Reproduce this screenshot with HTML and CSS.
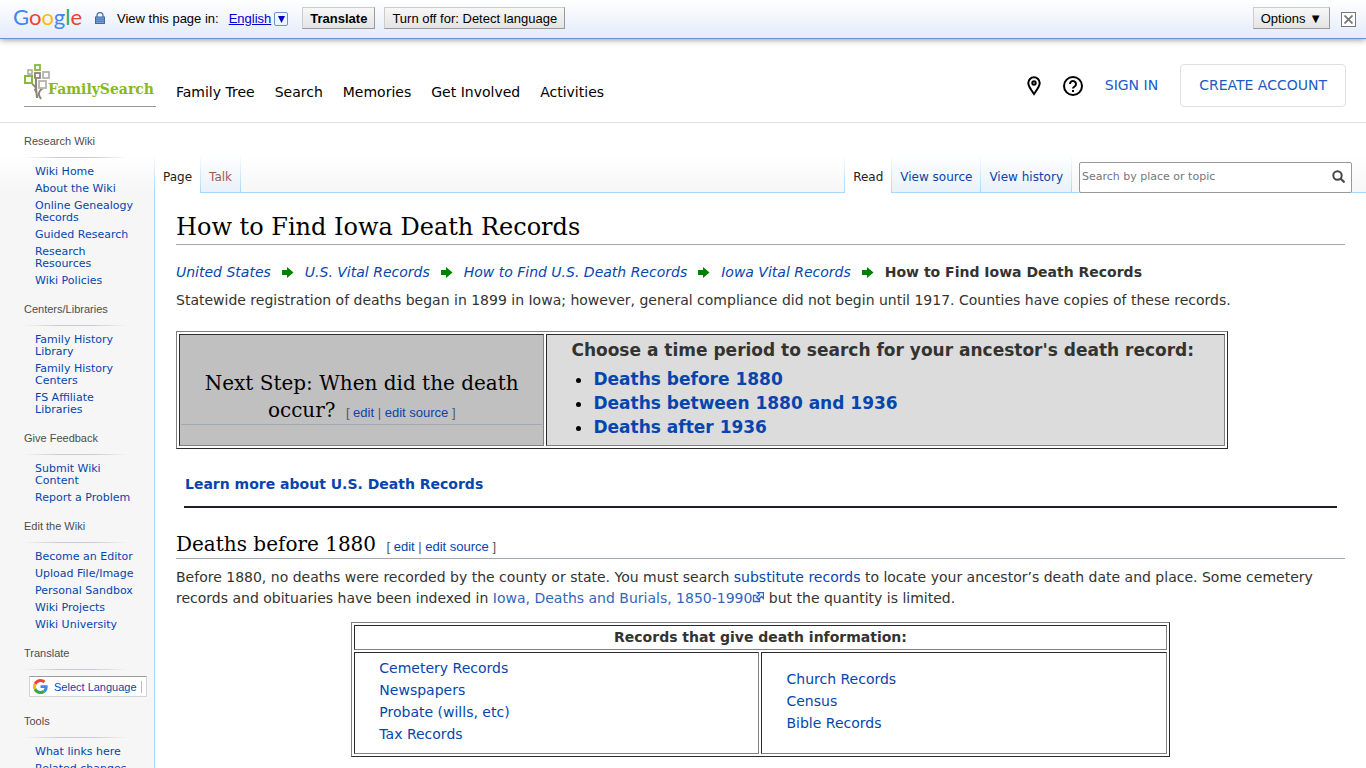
FILE: index.html
```html
<!DOCTYPE html>
<html lang="en">
<head>
  <meta charset="UTF-8" />
  <meta name="viewport" content="width=device-width, initial-scale=1.0"/>
  <title>How to Find Iowa Death Records - FamilySearch Wiki</title>
  <link rel="stylesheet" href="styles.css">
</head>
<body>
  <!-- Google translate bar -->
  <div class="translate-bar">
    <span class="google-logo"><span class="g-blue">G</span><span class="g-red">o</span><span class="g-yellow">o</span><span class="g-blue">g</span><span class="g-green">l</span><span class="g-red">e</span></span>
    <svg class="lock" width="10" height="12" viewBox="0 0 10 12">
      <path d="M2 5V3.5a3 3 0 0 1 6 0V5" fill="none" stroke="#5779a8" stroke-width="1.4"/>
      <rect x="0.5" y="5" width="9" height="6.5" fill="#7aa3dc" stroke="#41699e"/>
      <path d="M1 7.2h8M1 9.3h8" stroke="#41699e" stroke-width="0.8"/>
    </svg>
    <span class="view-in">View this page in:</span>
    <a class="lang" href="#"><span class="lang-name">English</span><span class="lang-arrow"><svg width="7" height="7" viewBox="0 0 7 7"><path d="M0 0h7L3.500 7z" fill="#00c"/></svg></span></a>
    <button class="bar-btn bold">Translate</button>
    <button class="bar-btn">Turn off for: Detect language</button>
    <button class="bar-btn options">Options ▼</button>
    <button class="close-btn" aria-label="Close"><svg width="9" height="9" viewBox="0 0 9 9"><path d="M0.500 0.500l8 8M8.500 0.500l-8 8" stroke="#777" stroke-width="1.800"/></svg></button>
  </div>

  <header class="site-header">
    <a class="logo" href="#">
      <svg width="27" height="36" viewBox="0 0 27 36" fill="none">
        <path d="M10.500 25c2 2 2.500 4 2.500 9M12 15v8c0 4 1 8 1 11M19 24c-3 2-4.500 4-4 7 .3 1.500 1 2.500 2 4" stroke="#8c8378" stroke-width="2"/>
        <path d="M8 20c2 1 3.500 3 4 6" stroke="#8c8378" stroke-width="1.400"/>
        <rect x="11" y="1" width="5" height="5" stroke="#87b940" stroke-width="1.800"/>
        <rect x="4" y="6" width="4" height="4" stroke="#a6a6a0" stroke-width="1.500"/>
        <rect x="11" y="9" width="5" height="5" stroke="#8c8378" stroke-width="1.800"/>
        <rect x="19" y="8" width="6" height="6" stroke="#b4b4ae" stroke-width="1.800"/>
        <rect x="1" y="12" width="7" height="7" fill="#fff" stroke="#87b940" stroke-width="2"/>
        <rect x="15" y="17" width="7" height="7" fill="#fff" stroke="#b4b4ae" stroke-width="1.800"/>
      </svg>
      <span>FamilySearch</span>
    </a>
    <nav class="main-nav">
      <a href="#">Family Tree</a>
      <a href="#">Search</a>
      <a href="#">Memories</a>
      <a href="#">Get Involved</a>
      <a href="#">Activities</a>
    </nav>
    <div class="account">
      <a href="#" aria-label="Locations"><svg width="14" height="20" viewBox="0 0 14 20" fill="none" stroke="#000" stroke-width="2"><path d="M7 18C4 13.500 1.300 10.500 1.300 7a5.700 5.700 0 0 1 11.400 0C12.700 10.500 10 13.500 7 18z"/><circle cx="7" cy="7" r="1.700"/></svg></a>
      <a href="#" aria-label="Help"><svg width="20" height="20" viewBox="0 0 20 20" fill="none" stroke="#000" stroke-width="2"><circle cx="10" cy="10" r="9"/><path d="M7 8a3 3 0 1 1 4.600 2.500C10.400 11.200 10 11.600 10 12.600"/><path d="M10 14v2"/></svg></a>
      <a class="sign-in" href="#">SIGN IN</a>
      <a class="create" href="#">CREATE ACCOUNT</a>
    </div>
  </header>

  <div class="wiki">
    <aside class="sidebar">
      <section>
        <h3>Research Wiki</h3>
        <ul>
          <li><a href="#">Wiki Home</a></li>
          <li><a href="#">About the Wiki</a></li>
          <li><a href="#">Online Genealogy Records</a></li>
          <li><a href="#">Guided Research</a></li>
          <li><a href="#">Research Resources</a></li>
          <li><a href="#">Wiki Policies</a></li>
        </ul>
      </section>
      <section>
        <h3>Centers/Libraries</h3>
        <ul>
          <li><a href="#">Family History Library</a></li>
          <li><a href="#">Family History Centers</a></li>
          <li><a href="#">FS Affiliate Libraries</a></li>
        </ul>
      </section>
      <section>
        <h3>Give Feedback</h3>
        <ul>
          <li><a href="#">Submit Wiki Content</a></li>
          <li><a href="#">Report a Problem</a></li>
        </ul>
      </section>
      <section>
        <h3>Edit the Wiki</h3>
        <ul>
          <li><a href="#">Become an Editor</a></li>
          <li><a href="#">Upload File/Image</a></li>
          <li><a href="#">Personal Sandbox</a></li>
          <li><a href="#">Wiki Projects</a></li>
          <li><a href="#">Wiki University</a></li>
        </ul>
      </section>
      <section>
        <h3>Translate</h3>
        <a class="select-lang" href="#">
          <svg width="15" height="15" viewBox="0 0 48 48"><path fill="#ea4335" d="M24 9.500c3.500 0 6.700 1.200 9.200 3.600l6.900-6.900C35.900 2.400 30.500 0 24 0 14.600 0 6.500 5.400 2.600 13.200l8 6.200C12.400 13.700 17.700 9.500 24 9.500z"/><path fill="#4285f4" d="M47 24.500c0-1.600-.2-3.100-.4-4.500H24v9h12.900c-.6 3-2.200 5.500-4.700 7.200l7.700 6C44.400 38 47 31.800 47 24.500z"/><path fill="#fbbc05" d="M10.500 28.600a14.500 14.500 0 0 1 0-9.200l-8-6.200a24 24 0 0 0 0 21.600z"/><path fill="#34a853" d="M24 48c6.500 0 11.900-2.100 15.900-5.800l-7.700-6c-2.200 1.500-4.900 2.300-8.200 2.300-6.300 0-11.600-4.200-13.500-9.900l-8 6.200C6.500 42.600 14.600 48 24 48z"/></svg>
          <span>Select Language</span>
        </a>
      </section>
      <section>
        <h3>Tools</h3>
        <ul>
          <li><a href="#">What links here</a></li>
          <li><a href="#">Related changes</a></li>
        </ul>
      </section>
    </aside>

    <div class="main">
      <div class="tabs">
        <a class="tab selected" href="#">Page</a>
        <a class="tab new" href="#">Talk</a>
        <a class="tab selected right" href="#">Read</a>
        <a class="tab" href="#">View source</a>
        <a class="tab" href="#">View history</a>
        <form class="search">
          <input type="text" placeholder="Search by place or topic" aria-label="Search by place or topic">
          <button type="button" aria-label="Search"><svg width="13" height="13" viewBox="0 0 13 13" fill="none" stroke="#444" stroke-width="2"><circle cx="5.500" cy="5.500" r="4.200"/><path d="M8.500 8.500l4 4"/></svg></button>
        </form>
      </div>

      <main class="content">
        <h1>How to Find Iowa Death Records</h1>
        <p class="crumbs">
          <a href="#">United States</a>
          <svg class="arrow" width="12" height="12" viewBox="0 0 12 12"><path d="M0 3h5V0l6.500 5.500L5 11V8H0z" fill="#008000"/></svg>
          <a href="#">U.S. Vital Records</a>
          <svg class="arrow" width="12" height="12" viewBox="0 0 12 12"><path d="M0 3h5V0l6.500 5.500L5 11V8H0z" fill="#008000"/></svg>
          <a href="#">How to Find U.S. Death Records</a>
          <svg class="arrow" width="12" height="12" viewBox="0 0 12 12"><path d="M0 3h5V0l6.500 5.500L5 11V8H0z" fill="#008000"/></svg>
          <a href="#">Iowa Vital Records</a>
          <svg class="arrow" width="12" height="12" viewBox="0 0 12 12"><path d="M0 3h5V0l6.500 5.500L5 11V8H0z" fill="#008000"/></svg>
          <b>How to Find Iowa Death Records</b>
        </p>
        <p class="intro">Statewide registration of deaths began in 1899 in Iowa; however, general compliance did not begin until 1917. Counties have copies of these records.</p>

        <table class="step-table">
          <tr>
            <td class="step">
              <h2>Next Step: When did the death<br>occur? <span class="edit">[ <a href="#">edit</a> | <a href="#">edit source</a> ]</span></h2>
            </td>
            <td class="choose">
              <p>Choose a time period to search for your ancestor's death record:</p>
              <ul>
                <li><a href="#">Deaths before 1880</a></li>
                <li><a href="#">Deaths between 1880 and 1936</a></li>
                <li><a href="#">Deaths after 1936</a></li>
              </ul>
            </td>
          </tr>
        </table>

        <p class="learn"><a href="#">Learn more about U.S. Death Records</a></p>

        <h2>Deaths before 1880 <span class="edit">[ <a href="#">edit</a> | <a href="#">edit source</a> ]</span></h2>
        <p>Before 1880, no deaths were recorded by the county or state. You must search <a href="#">substitute records</a> to locate your ancestor’s death date and place. Some cemetery records and obituaries have been indexed in <a class="external" href="#">Iowa, Deaths and Burials, 1850-1990<svg width="12" height="11" viewBox="0 0 12 11" fill="none" stroke="#36b"><path d="M4.500 3.500h-3v6h6v-3" stroke-width="1.300"/><path d="M5.500 0.500h6v6l-2-2-3 3-2-2 3-3z" fill="#fff" stroke-width="1.300"/></svg></a> but the quantity is limited.</p>

        <table class="records-table">
          <tr><th colspan="2">Records that give death information:</th></tr>
          <tr>
            <td>
              <ul>
                <li><a href="#">Cemetery Records</a></li>
                <li><a href="#">Newspapers</a></li>
                <li><a href="#">Probate (wills, etc)</a></li>
                <li><a href="#">Tax Records</a></li>
              </ul>
            </td>
            <td>
              <ul>
                <li><a href="#">Church Records</a></li>
                <li><a href="#">Census</a></li>
                <li><a href="#">Bible Records</a></li>
              </ul>
            </td>
          </tr>
        </table>
      </main>
    </div>
  </div>
</body>
</html>
```
FILE: styles.css
```css
:root {
  --link: #0645ad;
  --tab-line: #a7d7f9;
  --sans: Verdana, "DejaVu Sans", sans-serif;
  --arial: Arial, "Liberation Sans", sans-serif;
  --slab: "Museo Slab", "DejaVu Serif", serif;
}
* {
  box-sizing: border-box;
}
body {
  margin: 0;
  background: #fff;
  color: #333331;
  font-family: var(--sans);
  font-size: 14px;
  line-height: 21px;
}
a {
  color: var(--link);
  text-decoration: none;
}
svg {
  flex: none;
}
ul {
  margin: 0;
  padding: 0;
  list-style: none;
}

/* translate bar */
.translate-bar {
  position: relative;
  display: flex;
  align-items: center;
  height: 39px;
  padding: 0 10px 2px 13px;
  background: linear-gradient(#fff, #e3ecfa);
  border-bottom: 1px solid #6b90da;
  box-shadow: 0 1px 6px #999;
  font-family: var(--arial);
  font-size: 13px;
  color: #000;
}
.google-logo {
  width: 68px;
  margin-right: 14px;
  padding-bottom: 3px;
  font-family: Lato, sans-serif;
  font-size: 22px;
}
.g-blue { color: #4285f4; }
.g-red { color: #ea4335; }
.g-yellow { color: #fbbc05; }
.g-green { color: #34a853; }
.view-in {
  margin: 0 10px 0 12px;
}
.lang {
  display: flex;
  align-items: center;
  gap: 3px;
  margin-right: 14px;
  color: #00c;
}
.lang-name {
  text-decoration: underline;
}
.lang-arrow {
  display: flex;
  align-items: center;
  justify-content: center;
  width: 14px;
  height: 14px;
  margin-top: 2px;
  border: 1px solid #6b90da;
  border-radius: 2px;
}
.bar-btn {
  height: 22px;
  margin-right: 9px;
  padding: 0 7px;
  background: linear-gradient(#f7f7f7, #e4e4e4);
  border: 1px solid;
  border-color: #ccc #999 #999 #ccc;
  font-family: var(--arial);
  font-size: 13px;
  color: #000;
}
.bold {
  font-weight: bold;
}
.options {
  margin-left: auto;
  margin-right: 11px;
}
.close-btn {
  display: flex;
  align-items: center;
  justify-content: center;
  width: 15px;
  height: 15px;
  margin-top: 2px;
  padding: 0;
  background: #fff;
  border: 1px solid #777;
}

/* site header */
.site-header {
  display: flex;
  align-items: center;
  height: 84px;
  padding: 10px 20px 0 24px;
  border-bottom: 1px solid #dfe0e1;
}
.logo {
  display: flex;
  width: 132px;
  height: 43px;
  margin-right: 20px;
  border-bottom: 1px solid #999;
}
.logo span {
  margin: 15px 0 0 -3px;
  font-family: "DejaVu Serif", serif;
  font-size: 14px;
  font-weight: bold;
  color: #87b91c;
}
.main-nav {
  display: flex;
  gap: 20px;
  padding-top: 13px;
}
.main-nav a {
  color: #000;
}
.account {
  display: flex;
  align-items: center;
  margin-left: auto;
}
.account svg {
  display: block;
  margin-right: 22px;
}
.account a {
  color: #1b5bc4;
}
.create {
  margin-left: 22px;
  padding: 10px 18px;
  border: 1px solid #dfe0e1;
  border-radius: 4px;
}

/* wiki shell */
.wiki {
  display: flex;
  background: linear-gradient(#fff 32px, #f6f6f6 70px);
}
.sidebar {
  flex: none;
  width: 154px;
  padding: 11px 7px 0 24px;
  font-size: 11px;
  line-height: 12px;
}
.sidebar section {
  margin-bottom: 10px;
}
.sidebar h3 {
  height: 24px;
  margin: 0 20px 8px 0;
  border-bottom: 1px solid;
  border-image: linear-gradient(to right, transparent, #c8ccd1 33%, #c8ccd1 66%, transparent) 1;
  font-family: var(--arial);
  font-size: 11px;
  font-weight: normal;
  line-height: 14px;
  color: #4d4d4d;
}
.sidebar ul {
  padding: 0 9px 0 11px;
}
.sidebar li {
  padding-bottom: 5px;
}
.select-lang {
  display: flex;
  align-items: center;
  gap: 6px;
  width: 118px;
  height: 21px;
  margin: -2px 0 17px 5px;
  padding-left: 3px;
  background: #fff;
  border: 1px solid #d5d5d5;
  border-top-color: #9b9b9b;
  font-family: var(--arial);
  font-size: 11px;
}
.select-lang span {
  padding-right: 4px;
  border-right: 1px solid #bbb;
}

/* tabs */
.main {
  flex: 1;
  min-width: 0;
}
.tabs {
  display: flex;
  align-items: flex-end;
  height: 70px;
  padding-right: 14px;
  background: linear-gradient(var(--tab-line), var(--tab-line)) bottom / 100% 1px no-repeat;
}
.tab {
  height: 38px;
  padding: 13px 8px 0;
  background: linear-gradient(#fff, #e8f2f8);
  border: solid transparent;
  border-width: 0 1px 1px 0;
  border-image: linear-gradient(#fff, var(--tab-line)) 1;
  font-size: 12px;
  line-height: 18px;
}
.tab.selected {
  background: #fff;
  border-width: 0 1px;
  color: #222;
}
.tab.new {
  color: #a55858;
}
.tab.right {
  margin-left: auto;
}
.search {
  display: flex;
  width: 273px;
  height: 31px;
  margin-left: 7px;
  background: #fff;
  border: 1px solid #999;
  border-radius: 2px;
}
.search input {
  flex: 1;
  min-width: 0;
  padding: 0 2px 3px;
  background: none;
  border: 0;
  font-family: var(--sans);
  font-size: 11px;
}
.search input::placeholder {
  color: #72777d;
}
.search button {
  padding: 0 6px;
  background: none;
  border: 0;
}

/* article */
.content {
  padding: 17px 21px 40px;
  background: #fff;
  border-left: 1px solid var(--tab-line);
}
.content p {
  margin: 0;
}
h1, h2 {
  margin: 0;
  border-bottom: 1px solid #a2a9b1;
  font-family: var(--slab);
  font-weight: normal;
  color: #000;
}
h1 {
  font-size: 24px;
  line-height: 34px;
}
h2 {
  font-size: 20px;
  line-height: 27px;
}
.edit {
  margin-left: 4px;
  font-family: var(--arial);
  font-size: 13px;
  line-height: 1;
  color: #54595d;
}
.content .crumbs {
  display: flex;
  align-items: center;
  flex-wrap: wrap;
  gap: 11px;
  margin: 17px 0 7px;
}
.crumbs a {
  font-style: italic;
}
.step-table, .records-table {
  border: 1px solid;
  border-color: #808080 #2c2c2c #2c2c2c #808080;
  border-spacing: 2px;
}
td, th {
  padding: 1px;
  border: 1px solid;
  border-color: #2c2c2c #808080 #808080 #2c2c2c;
}
.step-table {
  width: 90%;
  margin: 20px 0 25px;
}
.step {
  width: 35%;
  padding-top: 16px;
  background: #c0c0c0;
  text-align: center;
}
.choose {
  padding: 5px 24px 6px;
  background: #dcdcdc;
  font-size: 17px;
  font-weight: bold;
}
.choose ul {
  padding: 6px 0 0 22px;
  line-height: 24px;
  list-style: disc;
}
.choose li::marker {
  color: #000;
}
.content .learn {
  margin: 0 8px 23px;
  padding: 0 1px 11px;
  border-bottom: 2px solid #211c30;
  font-weight: bold;
}
.content h2 + p {
  padding-top: 8px;
}
.external {
  color: #36b;
}
.records-table {
  width: 70%;
  margin: 13px auto 0;
}
.records-table td {
  width: 50%;
  padding: 4px 24px 8px;
  line-height: 22px;
}
```
